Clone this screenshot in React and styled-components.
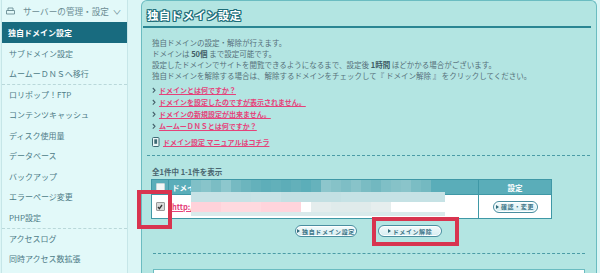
import React from "react";
import styled, { createGlobalStyle } from "styled-components";

const GlobalStyle = createGlobalStyle`
  html, body {
    margin: 0;
    padding: 0;
    background: #dcf6f6;
  }
  body {
    font-family: "Noto Sans CJK JP", "Noto Sans", sans-serif;
  }
`;

const Page = styled.div`
  position: relative;
  display: flex;
  align-items: flex-start;
  width: 600px;
  height: 273px;
  overflow: hidden;
  background: #dcf6f6;
`;

/* ---------- sidebar ---------- */

const Sidebar = styled.nav`
  width: 125px;
  height: 273px;
  margin-left: 1px;
  border-left: 1px solid #c6e6e8;
  border-right: 1px solid #c6e6e8;
  background: #e2f9f9;
  flex-shrink: 0;
`;

const SideHead = styled.div`
  display: flex;
  align-items: center;
  height: 22px;
  padding-left: 4px;
  color: #6b8d94;
  font-size: 8.6px;
  gap: 8px;
  white-space: nowrap;
`;

const Chevron = styled.span`
  margin-left: -3px;
  font-size: 6px;
  transform: scaleX(1.5);
`;

const SideItem = styled.div`
  display: flex;
  align-items: center;
  height: ${(p) => (p.$active ? "21px" : "20.5px")};
  padding-left: ${(p) => (p.$active ? "6px" : "7px")};
  font-size: 8px;
  font-weight: ${(p) => (p.$active ? 700 : 400)};
  color: ${(p) => (p.$active ? "#ffffff" : "#4e7c87")};
  background: ${(p) => (p.$active ? "#186b7f" : "transparent")};
  border-top: ${(p) => (p.$divider ? "1px dashed #b9d8da" : "none")};
  box-sizing: border-box;
  white-space: nowrap;
`;

/* ---------- panel ---------- */

const Panel = styled.main`
  width: 454px;
  height: 290px;
  margin-left: 13px;
  border: 1px solid #6bbcc1;
  border-bottom: none;
  border-radius: 6px 6px 0 0;
  background: #b3e5e2;
  flex-shrink: 0;
`;

const TitleBar = styled.div`
  height: 25px;
  margin: 0 5px 0 1px;
  padding-left: 4px;
  border-bottom: 2px solid #2a8592;
`;

const Title = styled.h1`
  margin: 0;
  padding-top: 3px;
  line-height: 22px;
  font-size: 11.5px;
  font-weight: 700;
  color: #ffffff;
  letter-spacing: 0.3px;
  text-shadow: 1px 0 0 #1c6c78, -1px 0 0 #1c6c78, 0 1px 0 #1c6c78,
    0 -1px 0 #1c6c78, 1px 1px 0 #1c6c78, -1px -1px 0 #1c6c78,
    1px -1px 0 #1c6c78, -1px 1px 0 #1c6c78;
`;

const Body = styled.div`
  padding: 0 6px 0 10px;
`;

const Intro = styled.p`
  margin: 9px 0 0;
  font-size: 7.5px;
  line-height: 11px;
  color: #56707a;
  white-space: nowrap;
  b {
    color: #3d5a64;
  }
`;

const LinkList = styled.ul`
  list-style: none;
  margin: 3px 0 0;
  padding: 0;
`;

const LinkItem = styled.li`
  display: flex;
  align-items: center;
  gap: 2px;
  height: 12px;
  font-size: 7px;
  font-weight: 700;
`;

const PinkLink = styled.a`
  color: #e5427a;
  text-decoration: underline;
  white-space: nowrap;
`;

const Manual = styled.div`
  display: flex;
  align-items: center;
  gap: 3px;
  height: 12px;
  margin-top: 4px;
  font-size: 7px;
  font-weight: 700;
`;

const Dashed = styled.hr`
  margin: ${(p) => p.$margin};
  border: none;
  border-top: 1px dashed #4b9ca6;
  height: 0;
`;

const Count = styled.div`
  margin-top: 10px;
  font-size: 7.5px;
  line-height: 11px;
  font-weight: 700;
  color: #4a6670;
`;

const TableWrap = styled.div`
  position: relative;
  width: 400px;
  margin: 2px 0 0 -1px;
`;

const Table = styled.table`
  width: 400px;
  border-collapse: collapse;
  font-size: 7.5px;
  table-layout: fixed;
  th {
    height: 14px;
    padding: 0 0 0 3px;
    background: #5aadb9;
    color: #ffffff;
    font-weight: 700;
    text-align: left;
    border: 1px solid #3f98a6;
  }
  td {
    height: 23px;
    padding: 0 0 0 3px;
    background: #ffffff;
    border: 1px solid #3f98a6;
  }
  th.narrow,
  td.narrow {
    padding-left: 0;
  }
`;

const Center = styled.div`
  display: flex;
  justify-content: center;
  align-items: center;
`;

const Box = styled.span`
  display: inline-flex;
  align-items: center;
  justify-content: center;
  width: 7px;
  height: 7px;
  border: 1px solid ${(p) => (p.$checked ? "#9a9a9a" : "#c9d8da")};
  border-radius: 1px;
  background: ${(p) => (p.$checked ? "#d9d9d9" : "#f4f7f7")};
`;

const Mosaic = styled.div`
  position: absolute;
  left: 40px;
  top: ${(p) => p.$top}px;
  display: flex;
  height: ${(p) => p.$h}px;
`;

const Tile = styled.span`
  width: ${(p) => p.$w}px;
  height: 100%;
  background: ${(p) => p.$c};
`;

const ButtonRow = styled.div`
  display: flex;
  justify-content: center;
  gap: 21px;
  margin-top: 6px;
  padding-right: 5px;
`;

const PillButton = styled.button`
  display: inline-flex;
  align-items: center;
  justify-content: center;
  gap: 2px;
  width: ${(p) => p.$w}px;
  height: 12px;
  padding: 0;
  border: 1px solid #4a8ea0;
  border-radius: 6px;
  background: linear-gradient(#f4fbfc, #d4ecf1);
  box-shadow: inset 0 0 0 1px #ffffff;
  color: #3c7486;
  font-family: inherit;
  font-size: 6px;
  font-weight: 700;
  letter-spacing: 0.6px;
  white-space: nowrap;
  &::before {
    content: "";
    border-left: 3px solid #2f6a7a;
    border-top: 2px solid transparent;
    border-bottom: 2px solid transparent;
  }
`;

const WhiteBox = styled.div`
  height: 30px;
  margin: 15px 5px 0 1px;
  border: 1px solid #6bbcc1;
  background: #ffffff;
`;

const RedMark = styled.div`
  position: absolute;
  left: ${(p) => p.$x}px;
  top: ${(p) => p.$y}px;
  width: ${(p) => p.$w}px;
  height: ${(p) => p.$h}px;
  border: 4px solid #d8344f;
  box-sizing: border-box;
`;

const sideItems = [
  { label: "独自ドメイン設定", active: true },
  { label: "サブドメイン設定" },
  { label: "ムームーＤＮＳへ移行" },
  { label: "ロリポップ！FTP", divider: true },
  { label: "コンテンツキャッシュ" },
  { label: "ディスク使用量" },
  { label: "データベース" },
  { label: "バックアップ" },
  { label: "エラーページ変更" },
  { label: "PHP設定" },
  { label: "アクセスログ", divider: true },
  { label: "同時アクセス数拡張" },
];

const links = [
  "ドメインとは何ですか？",
  "ドメインを設定したのですが表示されません。",
  "ドメインの新規設定が出来ません。",
  "ムームーＤＮＳとは何ですか？",
];

const headTiles = [
  [10, "#80c0c7"], [10, "#88c4ca"], [10, "#7bbdc4"], [10, "#8dc7cd"],
  [10, "#76bac2"], [10, "#6cb5be"], [10, "#64b1bb"], [10, "#5eaeb9"],
  [10, "#62b0ba"], [10, "#5dadb8"], [10, "#63b0ba"], [10, "#5caeb9"],
  [10, "#66b2bc"], [10, "#8dc6cc"], [10, "#86c2c8"], [10, "#7ebec5"],
  [10, "#88c3c9"], [10, "#7abcc3"], [10, "#72b8c0"], [10, "#7fbfc6"],
  [10, "#86c2c8"], [10, "#8ac4ca"], [10, "#7bbdc4"], [10, "#74b9c1"],
];

const midTiles = [
  [60, "#c6e2e5"], [30, "#c9e3e6"], [60, "#c3e0e3"], [104, "#c6e2e5"],
];

const pinkTiles = [
  [30, "#ffd2da"], [40, "#ffd9df"], [40, "#ffd4dc"], [10, "#ffffff"],
  [20, "#e4eded"], [40, "#e0ebeb"], [20, "#e6eeee"], [54, "#ffffff"],
];

const lowTiles = [[254, "#d9eaeb"]];

const ArrowIcon = () => (
  <svg width="5" height="7" viewBox="0 0 5 7">
    <path d="M0.8 1 L3 3.3 L0.8 5.6" fill="none" stroke="#44616b" strokeWidth="1.1" />
  </svg>
);

const BookIcon = () => (
  <svg width="8" height="10" viewBox="0 0 8 10">
    <rect x="0.5" y="0.5" width="6.5" height="9" rx="1" fill="#e9f5f5" stroke="#3e6a74" />
    <rect x="2.3" y="2.3" width="2.8" height="4.5" fill="#3e6a74" />
  </svg>
);

const ServerIcon = () => (
  <svg width="9" height="8" viewBox="0 0 9 8">
    <path d="M2 1 H7 V3.5 H2 Z" fill="none" stroke="#6b8d94" strokeWidth="0.9" />
    <path d="M0.5 3.5 H8.5 V7 H0.5 Z" fill="none" stroke="#6b8d94" strokeWidth="0.9" />
  </svg>
);

const Check = () => (
  <svg width="6" height="6" viewBox="0 0 6 6">
    <path d="M1 3 L2.4 4.6 L5 1" fill="none" stroke="#333" strokeWidth="1.3" />
  </svg>
);

const Tiles = ({ top, h, tiles }) => (
  <Mosaic $top={top} $h={h}>
    {tiles.map(([w, c], i) => (
      <Tile key={i} $w={w} $c={c} />
    ))}
  </Mosaic>
);

const App = () => {
  return (
    <Page>
      <GlobalStyle />
      <Sidebar>
        <SideHead>
          <ServerIcon />
          <span>サーバーの管理・設定</span>
          <Chevron>∨</Chevron>
        </SideHead>
        {sideItems.map((item) => (
          <SideItem key={item.label} $active={item.active} $divider={item.divider}>
            {item.label}
          </SideItem>
        ))}
      </Sidebar>

      <Panel>
        <TitleBar>
          <Title>独自ドメイン設定</Title>
        </TitleBar>
        <Body>
          <Intro>
            独自ドメインの設定・解除が行えます。
            <br />
            ドメインは <b>50個</b> まで設定可能です。
            <br />
            設定したドメインでサイトを閲覧できるようになるまで、設定後 <b>1時間</b> ほどかかる場合がございます。
            <br />
            独自ドメインを解除する場合は、解除するドメインをチェックして『 ドメイン解除 』 をクリックしてください。
          </Intro>

          <LinkList>
            {links.map((text) => (
              <LinkItem key={text}>
                <ArrowIcon />
                <PinkLink>{text}</PinkLink>
              </LinkItem>
            ))}
          </LinkList>

          <Manual>
            <BookIcon />
            <PinkLink>ドメイン設定 マニュアルはコチラ</PinkLink>
          </Manual>

          <Dashed $margin="7px 0 0 -5px" />

          <Count>全1件中 1-1件を表示</Count>

          <TableWrap>
            <Table>
              <colgroup>
                <col style={{ width: 17 }} />
                <col style={{ width: 310 }} />
                <col style={{ width: 73 }} />
              </colgroup>
              <thead>
                <tr>
                  <th className="narrow">
                    <Center>
                      <Box />
                    </Center>
                  </th>
                  <th>ドメイン名</th>
                  <th className="narrow">
                    <Center>設定</Center>
                  </th>
                </tr>
              </thead>
              <tbody>
                <tr>
                  <td className="narrow">
                    <Center>
                      <Box $checked>
                        <Check />
                      </Box>
                    </Center>
                  </td>
                  <td>
                    <PinkLink style={{ fontWeight: 700 }}>http://example-domain.jp</PinkLink>
                  </td>
                  <td className="narrow">
                    <Center>
                      <PillButton $w={45}>確認・変更</PillButton>
                    </Center>
                  </td>
                </tr>
              </tbody>
            </Table>
            <Tiles top={1} h={13} tiles={headTiles} />
            <Tiles top={13} h={10} tiles={midTiles} />
            <Tiles top={23} h={10} tiles={pinkTiles} />
            <Tiles top={33} h={4} tiles={lowTiles} />
          </TableWrap>

          <ButtonRow>
            <PillButton $w={62}>独自ドメイン設定</PillButton>
            <PillButton $w={64}>ドメイン解除</PillButton>
          </ButtonRow>

          <Dashed $margin="16px 5px 0 1px" />

          <WhiteBox />
        </Body>
      </Panel>

      <RedMark $x={137} $y={190} $w={35} $h={39} />
      <RedMark $x={372} $y={217} $w={87} $h={29} />
    </Page>
  );
};

export default App;
